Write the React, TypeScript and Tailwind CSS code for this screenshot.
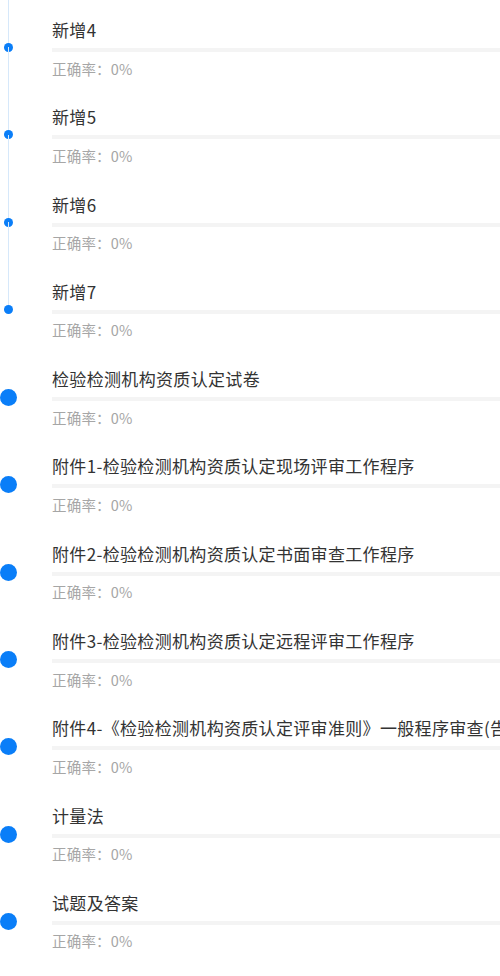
import React from "react";

const items = [
  { title: "新增4", small: true },
  { title: "新增5", small: true },
  { title: "新增6", small: true },
  { title: "新增7", small: true },
  { title: "检验检测机构资质认定试卷", small: false },
  { title: "附件1-检验检测机构资质认定现场评审工作程序", small: false },
  { title: "附件2-检验检测机构资质认定书面审查工作程序", small: false },
  { title: "附件3-检验检测机构资质认定远程评审工作程序", small: false },
  { title: "附件4-《检验检测机构资质认定评审准则》一般程序审查(告知承诺)", small: false },
  { title: "计量法", small: false },
  { title: "试题及答案", small: false },
];

function Item({ title, small }: { title: string; small: boolean }) {
  return (
    <div className="relative h-[87.3px] pl-[52px]">
      {small && (
        <div className="absolute left-[8px] top-[-58px] h-[88px] w-px bg-[#d6e8fa]" />
      )}
      {small ? (
        <div className="absolute left-[4px] top-[25px] h-[9px] w-[9px] rounded-full bg-[#0a7ef8]" />
      ) : (
        <div className="absolute left-0 top-[22px] h-[17px] w-[17px] rounded-full bg-[#0a7ef8]" />
      )}
      <div className="whitespace-nowrap text-[17px] leading-[24px] tracking-[0.33px] text-[#333333]">
        {title}
      </div>
      <div className="mt-[6px] h-[4px] w-full bg-[#f4f4f4]" />
      <div className="mt-[6.5px] text-[14.5px] leading-[20px] tracking-[0.2px] text-[#a6a6a6]">
        正确率：0%
      </div>
    </div>
  );
}

export default function App() {
  return (
    <div
      className="relative h-[976px] w-[500px] overflow-hidden bg-white pt-[18px]"
      style={{ fontFamily: '"Noto Sans CJK SC", "Noto Sans", sans-serif' }}
    >
      <div className="absolute left-[8px] top-0 h-[20px] w-px bg-[#d6e8fa]" />
      {items.map((it, i) => (
        <Item key={i} title={it.title} small={it.small} />
      ))}
    </div>
  );
}
